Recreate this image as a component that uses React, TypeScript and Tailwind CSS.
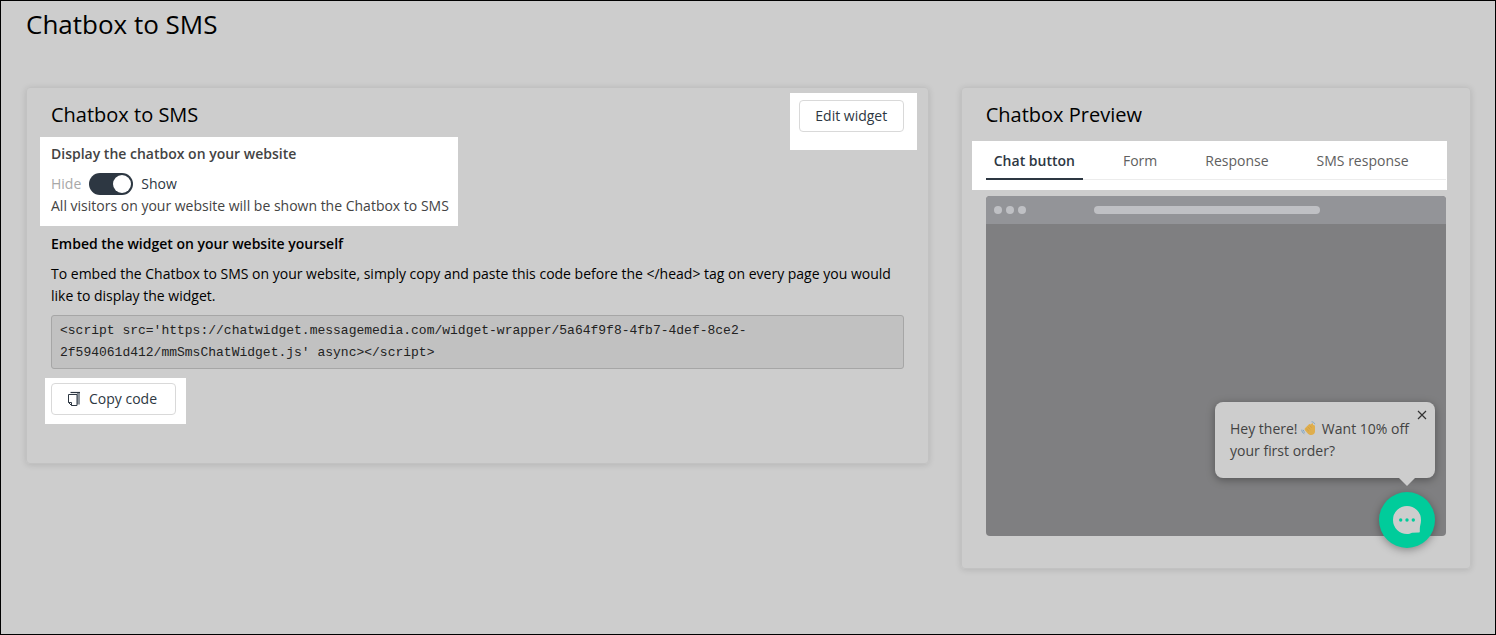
import React, { useState } from 'react';

const EMBED_CODE =
  "<script src='https://chatwidget.messagemedia.com/widget-wrapper/5a64f9f8-4fb7-4def-8ce2-2f594061d412/mmSmsChatWidget.js' async></script>";

const TABS = ['Chat button', 'Form', 'Response', 'SMS response'];

const CopyIcon: React.FC = () => (
  <svg width="14" height="16" viewBox="0 0 14 16" fill="none" aria-hidden="true">
    <path d="M10 2h3v11.500h-3z" fill="#8d949b" />
    <path d="M3.500 1.500H13" stroke="#2d3742" strokeWidth="1.200" />
    <path d="M1.500 3.500h8.500v11H4.500l-3-3z" stroke="#2d3742" />
    <path d="M1.500 11.500h3v3" stroke="#2d3742" />
  </svg>
);

const WaveIcon: React.FC = () => (
  <svg className="mr-0.5 inline-block align-[-2px]" width="15" height="15" viewBox="0 0 15 15" aria-hidden="true">
    <path d="M4.200 7 8 3.200c.5-.5 1.300-.2 1.400.4l1.600-1.200c.7-.4 1.400.2 1.100.9l-.2.900c1.200-.5 2.100.3 2.100 1.500v4.800c0 2.200-1.700 3.500-3.800 3.500-1.600 0-2.700-.7-3.700-1.800L4 9.200c-.6-.7-.4-1.600.2-2.200z" fill="#dfae4d" />
    <path d="m5.300 7.800 2.500 2.200M6.800 6l2.500 2.400M8.800 4.600l1.800 2" stroke="#c9963f" strokeWidth=".6" />
    <path d="M11 .8c1.200.1 2.200.8 2.600 2M.8 9c0 1.600.8 2.900 2.200 3.600M2.400 9.300c.1.900.5 1.500 1.200 2" stroke="#7fa5c4" strokeWidth="1" fill="none" strokeLinecap="round" />
  </svg>
);

const ChatIcon: React.FC = () => (
  <svg width="28" height="28" viewBox="0 0 28 28" aria-hidden="true">
    <path d="M14 0a14 14 0 0 1 14 14v.5c0 3-1.200 5.500-1.200 8.500v2.600c0 .6-.4 1-1 1l-6.800.1c-1.500.8-3.200 1.300-5 1.300A14 14 0 0 1 14 0z" fill="#cdcdcd" />
    <circle cx="7.700" cy="14" r="1.700" fill="#00cc9b" />
    <circle cx="14" cy="14" r="1.700" fill="#00cc9b" />
    <circle cx="20.300" cy="14" r="1.700" fill="#00cc9b" />
  </svg>
);

const Card: React.FC<{ children: React.ReactNode }> = ({ children }) => (
  <section className="rounded border border-[#c2c2c2] px-6 pt-[5px] shadow-[0_1px_6px_rgba(0,0,0,0.12)]">
    {children}
  </section>
);

const App: React.FC = () => {
  const [visible, setVisible] = useState(true);
  const [tab, setTab] = useState(TABS[0]);
  const [open, setOpen] = useState(true);

  return (
    <div className="min-h-screen border border-black bg-[#cdcdcd] pr-6 pl-[25px] font-['Open_Sans',sans-serif] text-sm leading-[22px] text-black">
      <h1 className="pt-[3px] text-[26px] leading-10">Chatbox to SMS</h1>

      <main className="mt-[43px] grid grid-cols-1 items-start gap-8 lg:grid-cols-[23fr_13fr]">
        <Card>
          <div className="flex items-start justify-between">
            <h2 className="pt-2 text-xl leading-7">Chatbox to SMS</h2>
            <div className="-mr-[13px] -mb-[13px] bg-white pt-[7px] pr-[13px] pb-[18px] pl-[9px]">
              <button type="button" className="h-8 w-[105px] rounded border border-[#d9d9d9] text-[#2d3742]">
                Edit widget
              </button>
            </div>
          </div>

          {/* Visibility */}
          <div className="-ml-[11px] w-[418px] bg-white px-[11px] pt-[6px] pb-[9px] text-[#434343]">
            <h3 className="font-semibold">Display the chatbox on your website</h3>
            <div className="mt-2 flex items-center gap-2">
              <span className="text-[#a8a8a8]">Hide</span>
              <input
                id="show-chatbox"
                type="checkbox"
                role="switch"
                checked={visible}
                onChange={e => setVisible(e.target.checked)}
                className="h-[22px] w-11 cursor-pointer appearance-none rounded-full bg-[#a8a8a8] p-[2px] before:block before:h-[18px] before:w-[18px] before:rounded-full before:bg-white checked:bg-[#2d3742] checked:before:ml-[22px]"
              />
              <label htmlFor="show-chatbox" className="text-[#2d3742]">Show</label>
            </div>
            <p className="whitespace-nowrap">All visitors on your website will be shown the Chatbox to SMS</p>
          </div>

          {/* Embed code */}
          <h3 className="mt-[7px] font-semibold">Embed the widget on your website yourself</h3>
          <p className="mt-2">
            To embed the Chatbox to SMS on your website, simply copy and paste this code before the &lt;/head&gt; tag on every page you would like to display the widget.
          </p>
          <pre className="mt-2 rounded-[3px] border border-[#a6a6a6] bg-[#c1c1c1] px-2 py-1 font-['Liberation_Mono',monospace] text-[13px] leading-[22px] whitespace-pre-wrap text-[#222]">
            {EMBED_CODE}
          </pre>
          <div className="mt-[9px] mb-[39px] -ml-[6px] w-[141px] bg-white pt-[5px] pb-[9px] pl-[6px]">
            <button
              type="button"
              onClick={() => navigator.clipboard?.writeText(EMBED_CODE)}
              className="flex h-8 w-[125px] items-center gap-2 rounded border border-[#d9d9d9] px-[15px] text-[#2d3742]"
            >
              <CopyIcon />
              Copy code
            </button>
          </div>
        </Card>

        <Card>
          <h2 className="pt-2 text-xl leading-7">Chatbox Preview</h2>
          <div className="-ml-[14px] -mr-px mt-3 bg-white pr-px pb-[10px] pl-[14px]">
            <div role="tablist" className="flex gap-8 border-b border-[#ececec]">
              {TABS.map(name => (
                <button
                  key={name}
                  type="button"
                  role="tab"
                  aria-selected={tab === name}
                  onClick={() => setTab(name)}
                  className={`-mb-px border-b-2 px-2 pt-[9px] pb-[6px] whitespace-nowrap ${tab === name ? 'border-[#2d3742] font-semibold text-[#2d3742]' : 'border-transparent text-[#606060]'}`}
                >
                  {name}
                </button>
              ))}
            </div>
          </div>

          <div className="relative mt-[6px] mb-8 h-[340px] rounded bg-[#7f7f81]">
            <div className="flex h-7 items-center gap-1 rounded-t bg-[#939498] px-2">
              <span className="h-2 w-2 rounded-full bg-[#bfc0c4]" />
              <span className="h-2 w-2 rounded-full bg-[#bfc0c4]" />
              <span className="h-2 w-2 rounded-full bg-[#bfc0c4]" />
              <span className="ml-16 h-2 w-[226px] rounded-full bg-[#bfc0c4]" />
            </div>

            {/* Floating widget */}
            <div className="absolute right-[11px] -bottom-3 flex flex-col items-end">
              {open && (
                <div className="relative mb-[14px] w-[220px] rounded-lg bg-[#cdcdcd] px-[15px] py-4 text-[#434343] shadow-[0_2px_8px_rgba(0,0,0,0.35)]">
                  <p>
                    Hey there! <WaveIcon /> Want 10% off
                    <br />
                    your first order?
                  </p>
                  <button type="button" aria-label="Close" onClick={() => setOpen(false)} className="absolute top-2 right-2">
                    <svg width="10" height="10" viewBox="0 0 10 10" stroke="#333" strokeWidth="1.200" aria-hidden="true">
                      <path d="m1 1 8 8M9 1 1 9" />
                    </svg>
                  </button>
                  <span className="absolute top-full right-5 border-x-8 border-t-8 border-x-transparent border-t-[#cdcdcd]" />
                </div>
              )}
              <button
                type="button"
                aria-label="Open chat"
                onClick={() => setOpen(true)}
                className="flex h-14 w-14 items-center justify-center rounded-full bg-[#00cc9b] shadow-[0_2px_8px_rgba(0,0,0,0.35)]"
              >
                <ChatIcon />
              </button>
            </div>
          </div>
        </Card>
      </main>
    </div>
  );
};

export default App;
